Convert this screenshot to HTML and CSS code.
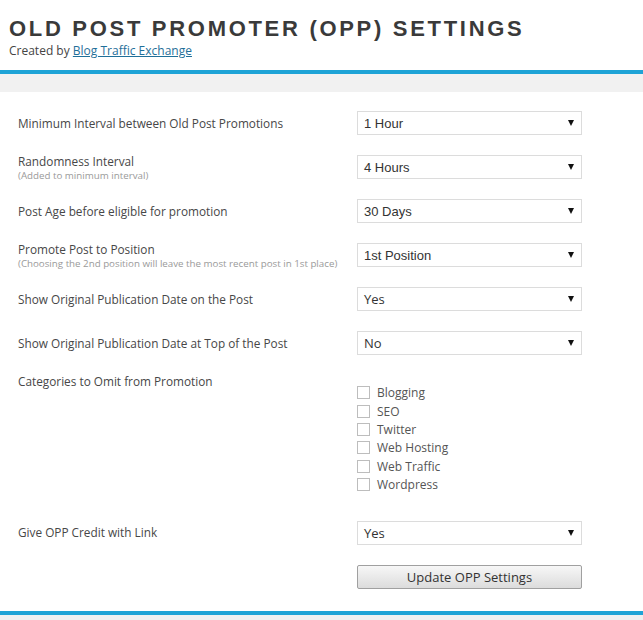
FILE: index.html
```html
<!DOCTYPE html>
<html>
<head>
<meta charset="utf-8">
<link rel="stylesheet" href="styles.css">
</head>
<body>
<header class="header">
  <h1 class="title">OLD POST PROMOTER (OPP) SETTINGS</h1>
  <div class="credit">Created by <a class="credit-link" href="#">Blog Traffic Exchange</a></div>
</header>
<div class="band"></div>
<main class="settings">
  <div class="row">
    <div class="label">Minimum Interval between Old Post Promotions</div>
    <div class="select arial"><span>1 Hour</span><i class="arrow"></i></div>
  </div>
  <div class="row">
    <div class="label">Randomness Interval<div class="sub">(Added to minimum interval)</div></div>
    <div class="select arial"><span>4 Hours</span><i class="arrow"></i></div>
  </div>
  <div class="row">
    <div class="label">Post Age before eligible for promotion</div>
    <div class="select arial"><span>30 Days</span><i class="arrow"></i></div>
  </div>
  <div class="row">
    <div class="label">Promote Post to Position<div class="sub">(Choosing the 2nd position will leave the most recent post in 1st place)</div></div>
    <div class="select arial"><span>1st Position</span><i class="arrow"></i></div>
  </div>
  <div class="row">
    <div class="label">Show Original Publication Date on the Post</div>
    <div class="select"><span>Yes</span><i class="arrow"></i></div>
  </div>
  <div class="row">
    <div class="label">Show Original Publication Date at Top of the Post</div>
    <div class="select"><span>No</span><i class="arrow"></i></div>
  </div>
  <div class="row row-top">
    <div class="label">Categories to Omit from Promotion</div>
    <ul class="checks">
      <li class="check"><span class="box"></span>Blogging</li>
      <li class="check"><span class="box"></span>SEO</li>
      <li class="check"><span class="box"></span>Twitter</li>
      <li class="check"><span class="box"></span>Web Hosting</li>
      <li class="check"><span class="box"></span>Web Traffic</li>
      <li class="check"><span class="box"></span>Wordpress</li>
    </ul>
  </div>
  <div class="row">
    <div class="label">Give OPP Credit with Link</div>
    <div class="select"><span>Yes</span><i class="arrow"></i></div>
  </div>
  <div class="row">
    <div class="label"></div>
    <button class="button">Update OPP Settings</button>
  </div>
</main>
<footer class="footer"></footer>
</body>
</html>
```
FILE: styles.css
```css
html, body {
  margin: 0;
  padding: 0;
  background: #ffffff;
}
body {
  font-family: "Open Sans", "DejaVu Sans", sans-serif;
  color: #444;
}
.header {
  padding: 16px 9px 10px;
}
.title {
  margin: 0;
  font-family: "Liberation Sans", Arial, sans-serif;
  font-weight: bold;
  font-size: 22px;
  line-height: 26px;
  letter-spacing: 2.7px;
  color: #3a3a3a;
}
.credit {
  font-size: 12px;
  line-height: 18px;
  color: #444;
}
.credit-link {
  color: #1f6f99;
  text-decoration: underline;
}
.band {
  border-top: 4px solid #1ea3d6;
  height: 18px;
  background: #f1f1f1;
}
.settings {
  padding: 9px 0 12px;
}
.row {
  display: grid;
  grid-template-columns: 339px 225px;
  grid-template-rows: 24px;
  align-items: center;
  padding: 10px 0 10px 18px;
}
.row-top {
  grid-template-rows: auto;
  align-items: start;
  padding: 8px 0 17px 18px;
}
.label {
  font-size: 11.8px;
  line-height: 17px;
  color: #474747;
}
.sub {
  font-size: 9.75px;
  line-height: 12px;
  color: #9a9a9a;
}
.select {
  box-sizing: border-box;
  height: 24px;
  border: 1px solid #dcdcdc;
  background: #fff;
  display: flex;
  align-items: center;
  justify-content: space-between;
  padding: 0 7px 0 6px;
  font-size: 13px;
  color: #333;
}
.select.arial {
  font-family: "Liberation Sans", Arial, sans-serif;
}
.arrow {
  width: 0;
  height: 0;
  border-left: 3px solid transparent;
  border-right: 3px solid transparent;
  border-top: 6px solid #111;
}
.checks {
  list-style: none;
  margin: 0;
  padding: 10.5px 0 0;
}
.check {
  display: flex;
  align-items: center;
  height: 18.4px;
  font-size: 12px;
  color: #555;
}
.box {
  box-sizing: border-box;
  width: 13px;
  height: 13px;
  border: 1px solid #bdbdbd;
  background: #fff;
  margin-right: 7px;
}
.button {
  box-sizing: border-box;
  height: 24px;
  width: 225px;
  border: 1px solid #a0a0a0;
  border-radius: 2px;
  background: linear-gradient(#f7f7f7, #dcdcdc);
  font-family: "Open Sans", sans-serif;
  font-size: 13px;
  color: #333;
  padding: 0;
}
.footer {
  border-top: 4px solid #1ea3d6;
  height: 5px;
  background: #eef0f1;
}
```
